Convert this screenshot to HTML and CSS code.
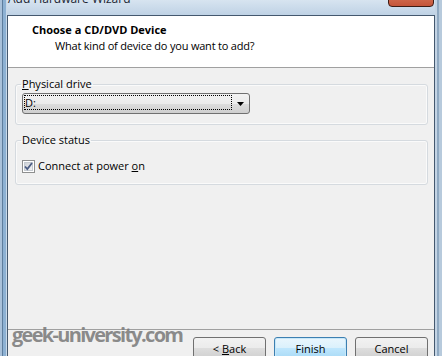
FILE: index.html
```html
<!DOCTYPE html>
<html lang="en">
<head>
    <meta charset="UTF-8">
    <meta name="viewport" content="width=device-width, initial-scale=1.0">
    <title>Add Hardware Wizard</title>
    <link rel="stylesheet" href="styles.css">
</head>
<body>
    <div class="window">
        <div class="titlebar">
            <span class="title">Add Hardware Wizard</span>
            <span class="close"></span>
        </div>

        <div class="client">
            <div class="header">
                <h1>Choose a CD/DVD Device</h1>
                <p>What kind of device do you want to add?</p>
            </div>

            <div class="content">
                <fieldset class="group">
                    <legend><u>P</u>hysical drive</legend>
                    <div class="combo">
                        <span class="combo-value"><span class="focus">D:</span></span>
                        <span class="combo-arrow">
                            <svg width="7" height="4" viewBox="0 0 7 4"><path d="M0 0h7L3.5 4z" fill="#000"/></svg>
                        </span>
                    </div>
                </fieldset>

                <fieldset class="group">
                    <legend>Device status</legend>
                    <label class="check">
                        <svg class="box" width="13" height="13" viewBox="0 0 13 13">
                            <defs>
                                <linearGradient id="boxfill" x1="0" y1="0" x2="1" y2="1">
                                    <stop offset="0" stop-color="#cbcfd5"/>
                                    <stop offset="1" stop-color="#f6f6f6"/>
                                </linearGradient>
                            </defs>
                            <rect x="0.5" y="0.5" width="12" height="12" fill="#fff" stroke="#8e8f8f"/>
                            <rect x="2.5" y="2.5" width="8" height="8" fill="url(#boxfill)" stroke="#c5cad0"/>
                            <path d="M3 6.5l2.3 2.6L10 3" fill="none" stroke="#4c5d83" stroke-width="1.8"/>
                        </svg>
                        <span>Connect at power <u>o</u>n</span>
                    </label>
                </fieldset>
            </div>

            <div class="footer">
                <span class="watermark">geek-university.com</span>
                <button class="btn">&lt; <u>B</u>ack</button>
                <button class="btn default">Finish</button>
                <button class="btn">Cancel</button>
            </div>
        </div>
    </div>
</body>
</html>
```

FILE: styles.css
```css
body {
    margin: 0;
    font-family: "Open Sans", "Noto Sans", sans-serif;
    font-size: 11px;
    color: #000;
    background-color: #b9cde1;
}

.window {
    position: relative;
    width: 442px;
    height: 356px;
    overflow: hidden;
    background:
        linear-gradient(to right, #a9c1da 0 2px, #5d7d9d 2px 3px, #8db1d3 3px 6px, #c8d9ea 6px 7px, transparent 7px 435px, #c4d4e4 435px 437px, #8fa9c2 437px 439px, #b7cadc 439px),
        linear-gradient(#d7e4f0, #bfd2e5 15px, #b9cde1);
}

.titlebar {
    display: flex;
    justify-content: space-between;
    height: 15px;
    padding: 0 8px 0 8px;
}

.title {
    margin-top: -9px;
    font-size: 12px;
    line-height: 15px;
    color: #1b2633;
}

.close {
    width: 44px;
    height: 20px;
    margin-top: -15px;
    border: 1px solid #3e1c15;
    border-radius: 0 0 4px 4px;
    background: linear-gradient(#e9a58d, #d06a4e 60%, #c4553a);
}

.client {
    display: flex;
    flex-direction: column;
    height: 356px;
    margin: 0 7px;
    border: 1px solid #44586e;
    border-bottom: 0;
    background-color: #f0f0f0;
}

.header {
    height: 45px;
    padding: 6px 0 0 24px;
    background-color: #fff;
    border-bottom: 1px solid #a0a0a0;
}

.header h1 {
    margin: 0;
    font-size: 11px;
    font-weight: bold;
    line-height: 16px;
}

.header p {
    margin: 0 0 0 23px;
    line-height: 16px;
    letter-spacing: -0.2px;
}

.content {
    padding: 0 6px 0 7px;
}

.group {
    margin: 8px 0 0;
    padding: 1px 6px 10px;
    border: 1px solid #d5dadf;
    border-radius: 3px;
    box-shadow: inset 0 0 0 1px #fafafa;
}

.group + .group {
    margin-top: 7px;
}

.group legend {
    margin-left: -1px;
    padding: 0 1px;
    line-height: 16px;
}

.combo {
    display: flex;
    width: 226px;
    height: 19px;
    border: 1px solid #707070;
    border-radius: 3px;
    background: linear-gradient(#f2f2f2, #ebebeb 50%, #dddddd 50%, #cfcfcf);
}

.combo-value {
    flex: 1;
    padding: 2px 0 2px 2px;
}

.focus {
    display: block;
    height: 13px;
    line-height: 13px;
    outline: 1px dotted #000;
}

.combo-arrow {
    display: flex;
    align-items: center;
    justify-content: center;
    width: 18px;
}

.check {
    display: flex;
    align-items: center;
    gap: 3px;
    padding-top: 9px;
    line-height: 16px;
}

.footer {
    position: relative;
    display: flex;
    justify-content: flex-end;
    gap: 8px;
    margin-top: auto;
    padding: 7px 6px 12px;
    border-top: 1px solid #a0a0a0;
}

.watermark {
    position: absolute;
    left: 4px;
    top: -5px;
    font-size: 20px;
    font-weight: bold;
    line-height: 20px;
    letter-spacing: -1.7px;
    color: rgba(120, 120, 120, 0.85);
}

.btn {
    width: 73px;
    height: 23px;
    padding: 0;
    font-family: inherit;
    font-size: 11px;
    color: #000;
    border: 1px solid #707070;
    border-radius: 3px;
    background: linear-gradient(#f2f2f2, #ebebeb 50%, #dddddd 50%, #cfcfcf);
}

.btn.default {
    border-color: #3c7fb1;
    background: linear-gradient(#eaf6fd, #d9f0fc 50%, #bee6fd 50%, #a7d9f5);
    box-shadow: inset 0 0 0 1px #c7e7f8;
}
```
